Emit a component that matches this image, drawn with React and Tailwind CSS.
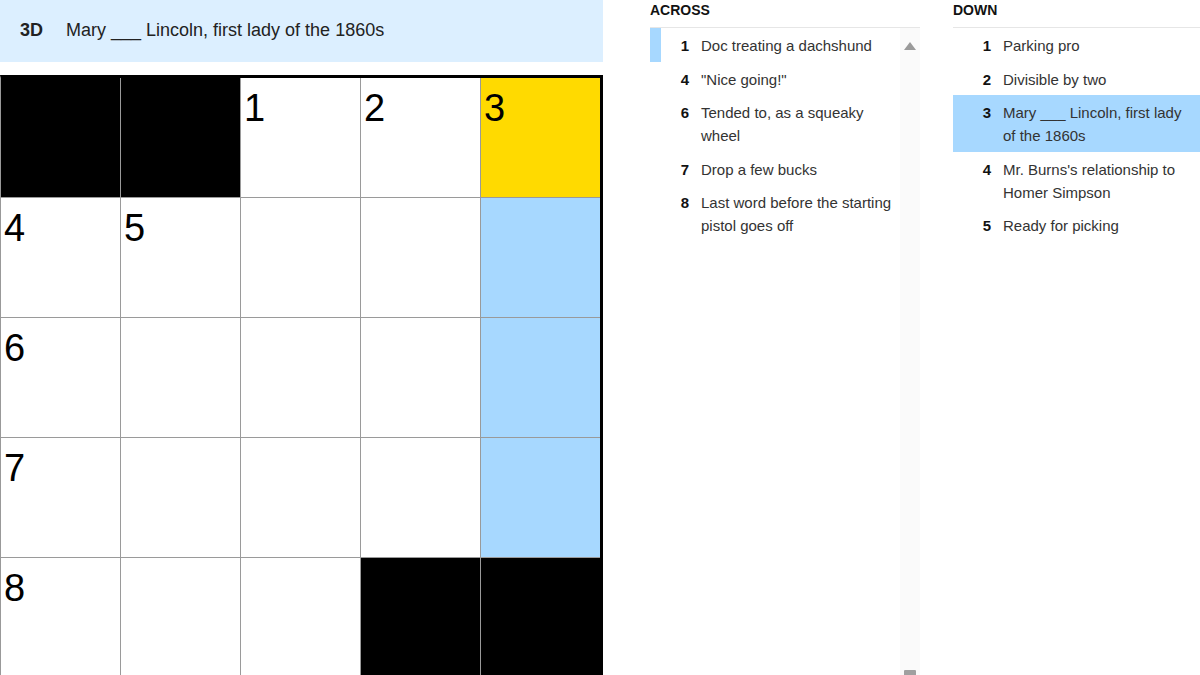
import React from "react";

const F = { fontFamily: '"Liberation Sans", Arial, sans-serif' };

const cells = [
  ["b", "b", "1", "2", "y3"],
  ["4", "5", "", "", "h"],
  ["6", "", "", "", "h"],
  ["7", "", "", "", "h"],
  ["8", "", "", "b", "b"],
];

function Cell({ v }) {
  if (v === "b") return <div className="bg-black" />;
  let bg = "bg-white";
  let num = v;
  if (v.startsWith("y")) {
    bg = "bg-[#ffda00]";
    num = v.slice(1);
  } else if (v === "h") {
    bg = "bg-[#a7d8ff]";
    num = "";
  }
  return (
    <div className={`${bg} pl-[3px] pt-[11px] text-[38px] leading-none text-black`}>{num}</div>
  );
}

const across = [
  { n: "1", t: ["Doc treating a dachshund"], active: true },
  { n: "4", t: ['"Nice going!"'] },
  { n: "6", t: ["Tended to, as a squeaky", "wheel"] },
  { n: "7", t: ["Drop a few bucks"] },
  { n: "8", t: ["Last word before the starting", "pistol goes off"] },
];

const down = [
  { n: "1", t: ["Parking pro"] },
  { n: "2", t: ["Divisible by two"] },
  { n: "3", t: ["Mary ___ Lincoln, first lady", "of the 1860s"], active: true },
  { n: "4", t: ["Mr. Burns's relationship to", "Homer Simpson"] },
  { n: "5", t: ["Ready for picking"] },
];

function ClueText({ lines }) {
  return (
    <div className="text-[15px] leading-[23px] text-[#333] whitespace-nowrap">
      {lines.map((l, i) => (
        <div key={i}>{l}</div>
      ))}
    </div>
  );
}

export default function App() {
  return (
    <div className="w-[1200px] h-[675px] overflow-hidden bg-white flex" style={F}>
      {/* left: clue bar + grid */}
      <div className="w-[603px] flex flex-col shrink-0">
        <div className="shrink-0 h-[62px] bg-[#dcefff] flex items-center pl-[20px] pb-[2px] text-[18px] text-[#222]">
          <span className="font-bold w-[46px]">3D</span>
          <span>Mary ___ Lincoln, first lady of the 1860s</span>
        </div>
        <div className="shrink-0 mt-[13px] border-t-[3px] border-r-[3px] border-l border-t-black border-r-black border-l-[#999] bg-[#9a9a9a] grid grid-cols-[119px_119px_119px_119px_119px] grid-rows-[119px_119px_119px_119px_119px] gap-px w-[603px]">
          {cells.flat().map((v, i) => (
            <Cell key={i} v={v} />
          ))}
        </div>
      </div>

      {/* across */}
      <div className="ml-[47px] w-[270px] shrink-0 flex flex-col">
        <div className="shrink-0 h-[28px] border-b border-[#e6e6e6] text-[14px] font-bold leading-[20px] text-[#121212]">
          ACROSS
        </div>
        <div className="flex flex-1">
          <div className="w-[250px]">
            {across.map((c) => (
              <div key={c.n} className="flex pt-[6px] pb-[4.5px]">
                <div className={`w-[11px] -mt-[6px] -mb-[4.5px] ${c.active ? "bg-[#a7d8ff]" : ""}`} />
                <div className="w-[28px] text-right text-[15px] leading-[23px] font-bold text-[#121212]">{c.n}</div>
                <div className="ml-[12px]">
                  <ClueText lines={c.t} />
                </div>
              </div>
            ))}
          </div>
          <div className="w-[20px] bg-[#fafafa] flex flex-col items-center justify-between">
            <svg width="12" height="8" viewBox="0 0 12 8" className="mt-[14px]">
              <path d="M6 0 L12 8 L0 8 Z" fill="#9a9a9a" />
            </svg>
            <div className="w-[12px] h-[5px] bg-[#a0a0a0] rounded-t-[1px]" />
          </div>
        </div>
      </div>

      {/* down */}
      <div className="ml-[33px] flex-1 flex flex-col">
        <div className="shrink-0 h-[28px] border-b border-[#e6e6e6] text-[14px] font-bold leading-[20px] text-[#121212]">
          DOWN
        </div>
        <div>
          {down.map((c) => (
            <div key={c.n} className={`flex pt-[6px] pb-[4.5px] ${c.active ? "bg-[#a7d8ff]" : ""}`}>
              <div className="w-[38px] text-right text-[15px] leading-[23px] font-bold text-[#121212]">{c.n}</div>
              <div className="ml-[12px]">
                <ClueText lines={c.t} />
              </div>
            </div>
          ))}
        </div>
      </div>
    </div>
  );
}
